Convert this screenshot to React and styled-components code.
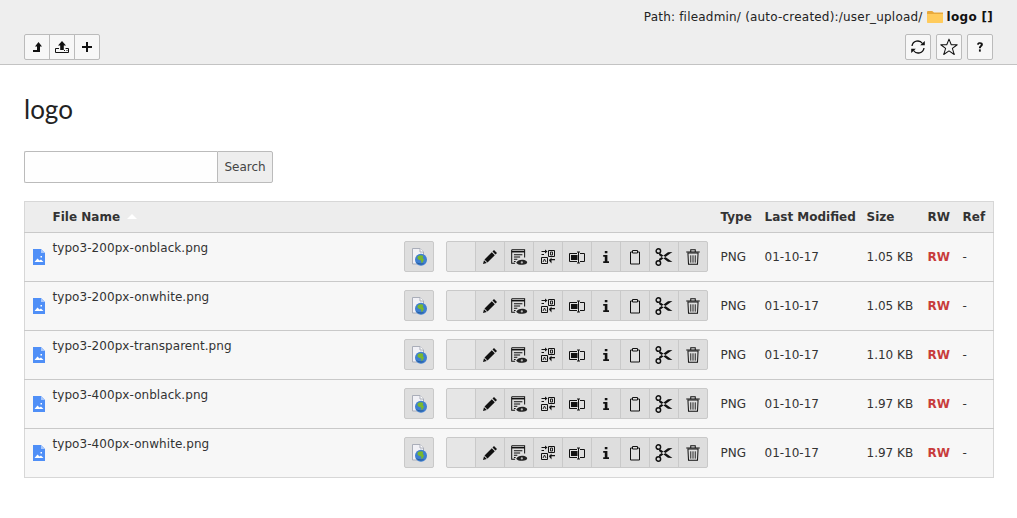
import React from 'react';
import styled, { createGlobalStyle } from 'styled-components';

const files = [
  { name: 'typo3-200px-onblack.png', size: '1.05 KB' },
  { name: 'typo3-200px-onwhite.png', size: '1.05 KB' },
  { name: 'typo3-200px-transparent.png', size: '1.10 KB' },
  { name: 'typo3-400px-onblack.png', size: '1.97 KB' },
  { name: 'typo3-400px-onwhite.png', size: '1.97 KB' },
];

const columnWidths = [28, 351, 42, 275, 44, 102, 61, 35, 31];

const Icon = ({ children, size = 16 }) => (
  <svg width={size} height={size} viewBox="0 0 16 16" fill="none">{children}</svg>
);

const UpIcon = () => (
  <Icon><path d="M9.500 3 13 7.500H11V13H4V11H8V7.500H6z" fill="#111" /></Icon>
);
const UploadIcon = () => (
  <Icon>
    <path d="M8 2 12 6.500H9.800V11H6.200V6.500H4z" fill="#111" />
    <path d="M5 9.500H1.500v4h13v-4h-3" stroke="#111" strokeWidth="1" />
    <path d="M10 11.500h1M12.500 11.500h1" stroke="#111" strokeWidth="1" />
  </Icon>
);
const PlusIcon = () => (
  <Icon><path d="M7 3h2v4h4v2H9v4H7V9H3V7h4z" fill="#111" /></Icon>
);
const RefreshIcon = () => (
  <Icon>
    <path d="M2 7A5.800 5.800 0 0 1 12.500 4.500" stroke="#111" strokeWidth="1.300" />
    <path d="M14 9A5.800 5.800 0 0 1 3.500 11.500" stroke="#111" strokeWidth="1.300" />
    <path d="M10.200 6.300h4.600V2zM5.800 9.700H1.200V14z" fill="#111" />
  </Icon>
);
const StarIcon = () => (
  <Icon size={18}>
    <path d="M8 1 10 6h5.300l-4.300 3.300 1.700 5.400L8 11.500l-4.700 3.200L5 9.300.7 6H6z" stroke="#111" strokeWidth=".9" strokeLinejoin="round" />
  </Icon>
);
const HelpIcon = () => (
  <Icon size={14}>
    <path d="M4.500 5C4.800 3.200 6.300 2.500 8 2.500c2 0 3.300 1 3.300 2.700 0 2.300-2.400 2.300-2.400 4.300H6.800c0-2.900 2.100-2.900 2.100-4.300 0-.6-.4-1-1-1-.7 0-1 .5-1.100 1.100z" fill="#111" />
    <path d="M6.800 10.700h2.100v2.600H6.800z" fill="#111" />
  </Icon>
);
const FolderIcon = () => (
  <svg width="16" height="12" viewBox="0 0 16 12">
    <path d="M0 1.200C0 .5.500 0 1.200 0h4L7 1.500h9V3H0z" fill="#e8a93c" />
    <path d="M0 3h16v8.200c0 .5-.3.800-.8.800H.8c-.5 0-.8-.3-.8-.8z" fill="#ffcb5c" />
  </svg>
);
const ImageFileIcon = () => (
  <svg width="12" height="16" viewBox="0 0 12 16">
    <path d="M0 0h8l4 4v12H0z" fill="#4f8ff7" />
    <path d="M8 0l4 4H8z" fill="#a9c8fb" />
    <path d="M1.500 13 4.500 9.500 6.500 11.500 8 10.500 10.500 13z" fill="#fff" />
    <rect x="7.500" y="7" width="1.500" height="1.500" fill="#fff" />
  </svg>
);
const ClipIcon = () => (
  <svg width="20" height="20" viewBox="0 0 20 20">
    <path d="M3.500 1.500h7.500l3.500 3.500v12h-11z" fill="#f1f1f6" stroke="#a9adb8" />
    <path d="M11 1.500V5h3.500" fill="#fff" stroke="#a9adb8" />
    <circle cx="12" cy="12.800" r="6" fill="#3f7fd0" />
    <path d="M8.800 9.300c1.600-1.200 4.200-1.400 5.400-.3l-.4 2.300 1.200 1-1 2.600-1.600 1.300-.2-2.700-2.400-.8-1.400-1.500z" fill="#7ab82e" />
    <path d="M7 15c1.500 2.500 5.500 3.500 8.500 1.300-2.500.6-6 .3-8.500-1.300z" fill="#23558f" />
  </svg>
);
const PencilIcon = () => (
  <Icon>
    <path d="M12 1 15 4 13.500 5.500 10.500 2.500zM9.800 3.200 12.800 6.200 5.500 13.500 2.500 10.500zM2 11.200 4.800 14 1 15z" fill="#111" />
  </Icon>
);
const RecordEyeIcon = () => (
  <Icon size={18}>
    <path d="M1.500 1.500h11.500v7M4.500 13.500h-3v-12" stroke="#111" strokeWidth=".9" />
    <path d="M1.500 3.300h11.500" stroke="#111" strokeWidth="1.300" />
    <path d="M3.500 6h7.500M3.500 8h5.500M3.500 10h3M3.500 12h1.500" stroke="#111" strokeWidth=".9" />
    <path d="M5.500 13c1.400-2.500 5.800-3.600 9.300-1.300.6.400.6 1.600 0 2-3.200 2-7.300 1.600-9.300-.7z" fill="#222" />
    <circle cx="10.500" cy="12.800" r="1" fill="#bbb" />
  </Icon>
);
const TranslateIcon = () => (
  <Icon>
    <path d="M8.500 1.500h6v6h-6zM1.500 8.500h6v6h-6z" stroke="#111" strokeWidth="1" />
    <path d="M10.500 3h2v3h-2zM3 13l1.500-3L6 13" stroke="#111" strokeWidth=".9" />
    <path d="M1.500 2H5v1H1.500zM1.500 5H4v1H1.500zM5 .5 7.500 2.500 5 4.500zM9.500 10H15v1.300H9.500zM11.500 8.500v6L9 11.500z" fill="#111" />
  </Icon>
);
const RenameIcon = () => (
  <Icon>
    <path d="M8 4.500H.5v8H8M11 4.500h4.500v8H11" stroke="#111" strokeWidth="1" />
    <path d="M2 6h6.500v5H2z" fill="#111" />
    <path d="M9.500 3v11M8 3h3M8 14h3" stroke="#111" strokeWidth="1" />
  </Icon>
);
const InfoIcon = () => (
  <Icon>
    <path d="M6.800 2h2.600v2.300H6.800zM5.200 6h4.200v6.200H11V14H5.200v-1.800h1.600V7.700H5.200z" fill="#111" />
  </Icon>
);
const ClipboardIcon = () => (
  <Icon>
    <path d="M3.500 3h9v12h-9z" stroke="#111" strokeWidth="1" />
    <path d="M5.500 1.500h5V4h-5z" fill="#dedede" stroke="#111" strokeWidth="1" />
  </Icon>
);
const ScissorsIcon = () => (
  <Icon size={18}>
    <circle cx="3" cy="2.700" r="2" stroke="#111" strokeWidth="1.300" />
    <circle cx="3" cy="13.300" r="2" stroke="#111" strokeWidth="1.300" />
    <path d="M4 4.300 15.500 12.500 11.500 12.300 3.500 6.300zM4 11.700 15.500 3.500 11.500 3.700 3.500 9.700z" fill="#111" />
  </Icon>
);
const TrashIcon = () => (
  <Icon size={18}>
    <path d="M3.500 4.500h9l-.5 10H4z" stroke="#111" strokeWidth=".9" />
    <path d="M2 3.500h12M6 3V1.500h4V3" stroke="#111" strokeWidth=".9" />
    <path d="M6 6.500V13M8 6.500V13M10 6.500V13" stroke="#111" strokeWidth=".8" />
  </Icon>
);

const GlobalStyle = createGlobalStyle`
  html, body {
    margin: 0;
    background: #fff;
  }
  body {
    font-family: "DejaVu Sans", Verdana, sans-serif;
    font-size: 12px;
    color: #333;
  }
`;

const Header = styled.header`
  height: 64px;
  background: #eee;
  border-bottom: 1px solid #c3c3c3;
  padding: 0 24px;
`;
const PathRow = styled.div`
  height: 34px;
  display: flex;
  justify-content: flex-end;
  align-items: center;
  color: #222;
`;
const PathText = styled.span`
  letter-spacing: 0.2px;
`;
const PathName = styled.strong`
  margin-left: 4px;
  letter-spacing: 0.3px;
  color: #111;
`;
const FolderWrap = styled.span`
  display: inline-flex;
  margin-left: 4px;
`;
const ToolRow = styled.div`
  display: flex;
  justify-content: space-between;
`;
const ToolGroup = styled.div`
  display: flex;
`;
const ToolRight = styled.div`
  display: flex;
  gap: 5px;
`;
const ToolButton = styled.button`
  width: 26px;
  height: 26px;
  padding: 0;
  margin-left: -1px;
  display: flex;
  align-items: center;
  justify-content: center;
  background: #f7f7f7;
  border: 1px solid #bbb;
  &:first-child { margin-left: 0; border-radius: 2px 0 0 2px; }
  &:last-child { border-radius: 0 2px 2px 0; }
`;
const SoloButton = styled(ToolButton)`
  margin-left: 0;
  &:first-child, &:last-child { border-radius: 2px; }
  border-radius: 2px;
`;
const Main = styled.main`
  padding: 0 24px;
`;
const Title = styled.h1`
  margin: 0;
  padding-top: 28px;
  font-family: Lato, sans-serif;
  font-weight: 400;
  font-size: 26px;
  line-height: 32px;
  color: #222;
`;
const SearchForm = styled.form`
  display: flex;
  margin-top: 26px;
  width: 249px;
  height: 32px;
`;
const SearchInput = styled.input`
  flex: 1;
  min-width: 0;
  box-sizing: border-box;
  border: 1px solid #bbb;
  border-right: 0;
  border-radius: 2px 0 0 2px;
  background: #fefefe;
`;
const SearchButton = styled.button`
  width: 56px;
  padding: 0;
  font: inherit;
  color: #444;
  background: #eee;
  border: 1px solid #bbb;
  border-radius: 0 2px 2px 0;
`;
const Table = styled.table`
  margin-top: 18px;
  width: 969px;
  table-layout: fixed;
  border-collapse: collapse;
  border: 1px solid #d7d7d7;
`;
const Col = styled.col`
  width: ${p => p.$w}px;
`;
const HeadRow = styled.tr`
  height: 31px;
  background: #ededed;
  border-bottom: 1px solid #c9c9c9;
`;
const Th = styled.th`
  padding: 0;
  text-align: left;
  font-weight: 700;
  color: #333;
  white-space: nowrap;
`;
const SortArrow = styled.span`
  display: inline-block;
  margin-left: 7px;
  vertical-align: 2px;
  border-left: 5px solid transparent;
  border-right: 5px solid transparent;
  border-bottom: 5px solid #fff;
`;
const Row = styled.tr`
  height: 49px;
  background: #f7f7f7;
  border-bottom: 1px solid ${p => (p.$last ? '#d7d7d7' : '#c9c9c9')};
`;
const Td = styled.td`
  padding: 0;
  white-space: nowrap;
  vertical-align: middle;
`;
const IconCell = styled(Td)`
  vertical-align: top;
  padding: 16px 0 0 8px;
  line-height: 0;
`;
const NameCell = styled(Td)`
  vertical-align: top;
  padding-top: 7px;
  line-height: 16px;
  letter-spacing: 0.06px;
`;
const ButtonCell = styled(Td)`
  vertical-align: top;
  padding-top: 8px;
`;
const Actions = styled.div`
  display: flex;
`;
const ActionButton = styled.button`
  width: 30px;
  height: 31px;
  flex: none;
  padding: 0;
  margin-left: -1px;
  display: flex;
  align-items: center;
  justify-content: center;
  background: ${p => (p.$blank ? '#e6e6e6' : '#dedede')};
  border: 1px solid #c9c9c9;
  &:first-child { margin-left: 0; border-radius: 2px 0 0 2px; }
  &:last-child { border-radius: 0 2px 2px 0; }
`;
const ClipButton = styled(ActionButton)`
  margin-left: 0;
  &:first-child, &:last-child { border-radius: 2px; }
`;
const Perm = styled.span`
  font-weight: 700;
  color: #c83c3c;
`;

const actionIcons = [PencilIcon, RecordEyeIcon, TranslateIcon, RenameIcon, InfoIcon, ClipboardIcon, ScissorsIcon, TrashIcon];

const App = () => {
  return (
    <>
      <GlobalStyle />
      <Header>
        <PathRow>
          <PathText>Path: fileadmin/ (auto-created):/user_upload/</PathText>
          <FolderWrap><FolderIcon /></FolderWrap>
          <PathName>logo []</PathName>
        </PathRow>
        <ToolRow>
          <ToolGroup>
            <ToolButton><UpIcon /></ToolButton>
            <ToolButton><UploadIcon /></ToolButton>
            <ToolButton><PlusIcon /></ToolButton>
          </ToolGroup>
          <ToolRight>
            <SoloButton><RefreshIcon /></SoloButton>
            <SoloButton><StarIcon /></SoloButton>
            <SoloButton><HelpIcon /></SoloButton>
          </ToolRight>
        </ToolRow>
      </Header>
      <Main>
        <Title>logo</Title>
        <SearchForm>
          <SearchInput />
          <SearchButton type="button">Search</SearchButton>
        </SearchForm>
        <Table>
          <colgroup>
            {columnWidths.map((w, i) => <Col key={i} $w={w} />)}
          </colgroup>
          <thead>
            <HeadRow>
              <Th />
              <Th>File Name<SortArrow /></Th>
              <Th />
              <Th />
              <Th>Type</Th>
              <Th>Last Modified</Th>
              <Th>Size</Th>
              <Th>RW</Th>
              <Th>Ref</Th>
            </HeadRow>
          </thead>
          <tbody>
            {files.map((f, i) => (
              <Row key={f.name} $last={i === files.length - 1}>
                <IconCell><ImageFileIcon /></IconCell>
                <NameCell>{f.name}</NameCell>
                <ButtonCell><ClipButton><ClipIcon /></ClipButton></ButtonCell>
                <ButtonCell>
                  <Actions>
                    <ActionButton $blank />
                    {actionIcons.map((A, n) => (
                      <ActionButton key={n}><A /></ActionButton>
                    ))}
                  </Actions>
                </ButtonCell>
                <Td>PNG</Td>
                <Td>01-10-17</Td>
                <Td>{f.size}</Td>
                <Td><Perm>RW</Perm></Td>
                <Td>-</Td>
              </Row>
            ))}
          </tbody>
        </Table>
      </Main>
    </>
  );
};

export default App;
